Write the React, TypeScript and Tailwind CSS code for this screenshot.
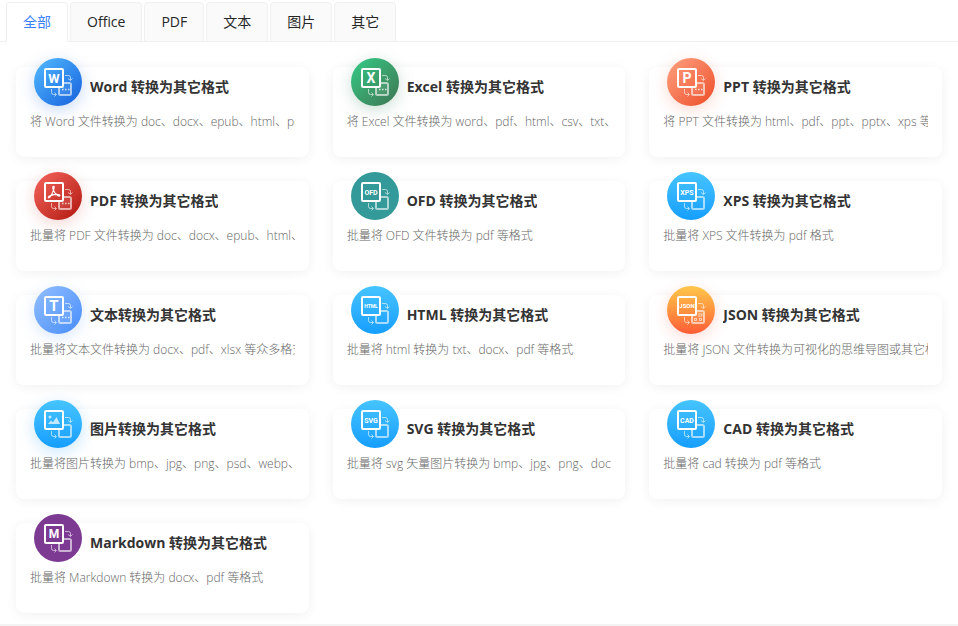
import { useState } from "react";
import type { ReactNode } from "react";

const TABS = ["全部", "Office", "PDF", "文本", "图片", "其它"];

const BLUE = "bg-linear-to-b from-[#45c4ff] to-[#149eff]";

interface Converter {
  title: string;
  desc: string;
  bg: string;
  glyph: ReactNode;
  back?: "dots" | "grid";
}

const CONVERTERS: Converter[] = [
  {
    title: "Word 转换为其它格式",
    desc: "将 Word 文件转换为 doc、docx、epub、html、pdf、txt 等格式",
    bg: "bg-linear-to-br from-[#54baff] to-[#1a5fdb] shadow-[0_4px_16px_rgba(40,110,230,0.25)]",
    glyph: <Label size={13}>W</Label>,
    back: "dots",
  },
  {
    title: "Excel 转换为其它格式",
    desc: "将 Excel 文件转换为 word、pdf、html、csv、txt、xml 等格式",
    bg: "bg-linear-to-br from-[#2fcc86] to-[#3b7653] shadow-[0_4px_16px_rgba(50,130,90,0.25)]",
    glyph: <Label size={14}>X</Label>,
    back: "dots",
  },
  {
    title: "PPT 转换为其它格式",
    desc: "将 PPT 文件转换为 html、pdf、ppt、pptx、xps 等格式",
    bg: "bg-linear-to-br from-[#ffa080] to-[#eb4a22] shadow-[0_4px_16px_rgba(240,90,50,0.22)]",
    glyph: <Label size={14}>P</Label>,
    back: "dots",
  },
  {
    title: "PDF 转换为其它格式",
    desc: "批量将 PDF 文件转换为 doc、docx、epub、html、jpg 等格式",
    bg: "bg-linear-to-br from-[#f5645c] to-[#b00d05] shadow-[0_4px_16px_rgba(200,30,20,0.18)]",
    glyph: <Acrobat />,
    back: "dots",
  },
  {
    title: "OFD 转换为其它格式",
    desc: "批量将 OFD 文件转换为 pdf 等格式",
    bg: "bg-[#339a99]",
    glyph: <Label size={7}>OFD</Label>,
  },
  {
    title: "XPS 转换为其它格式",
    desc: "批量将 XPS 文件转换为 pdf 格式",
    bg: BLUE,
    glyph: <Label size={7}>XPS</Label>,
  },
  {
    title: "文本转换为其它格式",
    desc: "批量将文本文件转换为 docx、pdf、xlsx 等众多格式",
    bg: "bg-linear-to-br from-[#93bfff] to-[#458cfa] shadow-[0_4px_16px_rgba(70,140,250,0.2)]",
    glyph: <Label size={15}>T</Label>,
    back: "dots",
  },
  {
    title: "HTML 转换为其它格式",
    desc: "批量将 html 转换为 txt、docx、pdf 等格式",
    bg: BLUE,
    glyph: <Label size={5}>HTML</Label>,
  },
  {
    title: "JSON 转换为其它格式",
    desc: "批量将 JSON 文件转换为可视化的思维导图或其它格式",
    bg: "bg-linear-to-b from-[#ffc64a] to-[#ff5a36] shadow-[0_4px_16px_rgba(255,80,60,0.2)]",
    glyph: <Label size={6}>JSON</Label>,
    back: "grid",
  },
  {
    title: "图片转换为其它格式",
    desc: "批量将图片转换为 bmp、jpg、png、psd、webp、tiff 等格式",
    bg: "bg-linear-to-b from-[#45c4ff] to-[#149eff] shadow-[0_4px_16px_rgba(30,160,255,0.25)]",
    glyph: <Picture />,
  },
  {
    title: "SVG 转换为其它格式",
    desc: "批量将 svg 矢量图片转换为 bmp、jpg、png、docx 等格式",
    bg: BLUE,
    glyph: <Label size={7}>SVG</Label>,
  },
  {
    title: "CAD 转换为其它格式",
    desc: "批量将 cad 转换为 pdf 等格式",
    bg: BLUE,
    glyph: <Label size={7}>CAD</Label>,
  },
  {
    title: "Markdown 转换为其它格式",
    desc: "批量将 Markdown 转换为 docx、pdf 等格式",
    bg: "bg-[#7c3a92]",
    glyph: <Label size={12}>M</Label>,
  },
];

export default function App() {
  const [active, setActive] = useState("全部");

  return (
    <div className="min-h-screen bg-white pt-0.5 font-['Open_Sans','Noto_Sans_CJK_SC',sans-serif]">
      <div role="tablist" className="flex gap-0.5 border-b border-[#f0f0f0] px-1.5">
        {TABS.map((t) => (
          <button
            key={t}
            role="tab"
            aria-selected={t === active}
            onClick={() => setActive(t)}
            className={`-mb-px h-10 cursor-pointer rounded-t-sm border border-[#f0f0f0] px-4 text-sm ${
              t === active ? "border-b-white bg-white text-[#3c82fe]" : "bg-[#fafafa] text-[#262626]"
            }`}
          >
            {t}
          </button>
        ))}
      </div>
      <main className="grid grid-cols-3 gap-6 border-b-2 border-[#f3f3f3] px-4 pt-[25px] pb-[11px]">
        {CONVERTERS.map((c) => (
          <Card key={c.title} item={c} />
        ))}
      </main>
    </div>
  );
}

function Card({ item }: { item: Converter }) {
  return (
    <a href="#" className="block h-[90px] min-w-0 rounded-lg bg-white px-3.5 shadow-[0_2px_12px_rgba(0,0,0,0.06)]">
      <div className="-mt-[9px] flex items-center gap-2 pl-1">
        <span className={`size-12 shrink-0 rounded-full ${item.bg}`}>
          <ConvertIcon back={item.back}>{item.glyph}</ConvertIcon>
        </span>
        <h3 className="truncate pt-2.5 text-sm font-bold text-[#333]">{item.title}</h3>
      </div>
      <p className="mt-1.5 overflow-hidden text-xs leading-5 font-light whitespace-nowrap text-[#666]">{item.desc}</p>
    </a>
  );
}

// Front page with a glyph, a second page behind it and two arrows between them
function ConvertIcon({ back, children }: { back?: "dots" | "grid"; children: ReactNode }) {
  return (
    <svg viewBox="0 0 48 48" className="size-12" fill="none" aria-hidden="true">
      <g stroke="#fff" strokeOpacity="0.6">
        <path
          d="M30 25h5.5a1.5 1.5 0 0 1 1.5 1.5v9a1.5 1.5 0 0 1-1.5 1.5h-9a1.5 1.5 0 0 1-1.5-1.5V30"
          strokeWidth="2"
          fill={back ? "#fff" : "none"}
          fillOpacity="0.08"
        />
        <path d="M31 17.5h3.5a2 2 0 0 1 2 2V22M34 20.5l2.5 2 2-2" />
        <path d="M17.5 31v3.5a2 2 0 0 0 2 2H22M20.5 34.5l2 2-2 2" />
        {back === "grid" && <path d="M31 28h4v2h-4M27.500 32.500h2v2h-2zM32.500 32.500h2v2h-2z" />}
      </g>
      {back === "dots" && <path d="M28 31.5h1.500M31 31.5h1.500M34 31.5h1.500" stroke="#fff" strokeOpacity="0.75" strokeWidth="1.500" />}
      <rect x="11" y="11" width="18" height="18" rx="1" stroke="#fff" strokeWidth="2" />
      {children}
    </svg>
  );
}

function Label({ size, children }: { size: number; children: string }) {
  return (
    <text
      x="20"
      y={20 + Math.round(size * 0.36)}
      fontSize={size}
      textAnchor="middle"
      fill="#fff"
      className="font-[Roboto,sans-serif] font-bold"
    >
      {children}
    </text>
  );
}

function Acrobat() {
  return (
    <path
      d="M20 14.500c-1.300-.8-1.600 1-.6 3.600.9 2.400 2.700 4.700 4.600 5.700 1.600.8 2.600-.3 1.300-1-1.700-.8-5.300-.4-8.300.6-2.700.9-3.300 2.700-2.100 2.300 1.400-.5 3.200-3.700 4.300-6.800.8-2.300 1.300-3.800.8-4.400z"
      stroke="#fff"
      strokeWidth="1.200"
      strokeLinejoin="round"
    />
  );
}

function Picture() {
  return (
    <g fill="#fff" fillOpacity="0.7">
      <circle cx="16" cy="17" r="1.500" />
      <path d="M14 24l3-3.500 2 1.700 3.500-5.200 3.500 7z" />
    </g>
  );
}
